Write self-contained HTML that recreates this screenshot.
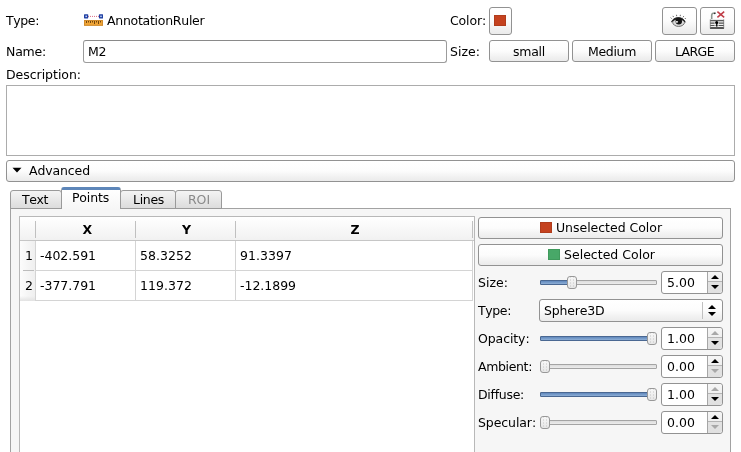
<!DOCTYPE html>
<html><head><meta charset="utf-8"><title>Annotation Properties</title>
<style>
html,body{margin:0;padding:0;background:#fff;}
body{width:741px;height:452px;position:relative;overflow:hidden;font-family:"DejaVu Sans","Liberation Sans",sans-serif;font-size:12.5px;color:#000;font-kerning:none;font-variant-ligatures:none;}
.t{position:absolute;line-height:14px;white-space:nowrap;will-change:transform;}
.btn{position:absolute;box-sizing:border-box;border:1px solid #929292;border-radius:3px;background:linear-gradient(#ffffff 0%,#fcfcfc 50%,#f1f1f1 80%,#ebebeb 100%);}
.box{position:absolute;box-sizing:border-box;border:1px solid #9c9c9c;border-top-color:#8a8a8a;border-radius:3px;background:#fff;}
.groove{position:absolute;box-sizing:border-box;height:5px;border:1px solid #a4a4a4;border-radius:1px;background:linear-gradient(#dcdcdc,#ececec);}
.fill{position:absolute;box-sizing:border-box;height:5px;border:1px solid #4a6892;border-radius:1px;background:linear-gradient(#6088bd,#8eafd6);}
.handle{position:absolute;box-sizing:border-box;width:10px;height:13px;border:1px solid #989898;border-radius:3px;background:radial-gradient(circle,#c4c4c4 0.55px,rgba(196,196,196,0) 0.95px) 1px 1.5px/3px 3px,linear-gradient(#f8f8f8,#e6e6e6);}
.spin{position:absolute;box-sizing:border-box;width:62px;height:23px;border:1px solid #929292;border-radius:3px;background:#fff;}
.spin .b{position:absolute;right:0;top:0;width:14px;height:21px;border-left:1px solid #a6a6a6;background:linear-gradient(#f6f6f6 0%,#efefef 45%,#e2e2e2 50%,#e0e0e0 100%);border-radius:0 3px 3px 0;}
.spin .b i{position:absolute;left:0;right:0;top:9px;height:1px;background:#b4b4b4;}
.up,.dn{position:absolute;width:0;height:0;border-left:4px solid transparent;border-right:4px solid transparent;}
.up{border-bottom:4px solid #000;}
.dn{border-top:4px solid #000;}
.dis.up{border-bottom-color:#a8a8a8;}
.dis.dn{border-top-color:#a8a8a8;}
.tab{position:absolute;box-sizing:border-box;border:1px solid #9a9a9a;border-bottom:none;border-radius:3px 3px 0 0;background:linear-gradient(#f4f4f4,#dcdcdc);}
.ln{position:absolute;}
</style></head><body>
<!-- row 1 -->
<div class="t" style="left:5.6px;top:14px;letter-spacing:-0.374px;">Type:</div>
<svg style="position:absolute;left:84px;top:14px" width="19" height="12" viewBox="0 0 19 12">
 <rect x="0" y="6" width="19" height="5.6" fill="#f1a637"/>
 <rect x="0.5" y="6.5" width="18" height="4.8" fill="none" stroke="#cf8a2c" stroke-width="1"/>
 <path d="M2.5 7v2M4.5 7v1.5M6.5 7v2M8.5 7v1.5M10.5 7v3M12.5 7v1.5M14.5 7v3M16.5 7v1.5" stroke="#5e3606" stroke-width="1" opacity="0.85"/>
 <path d="M4 2.4h11" stroke="#d04a6a" stroke-width="1" stroke-dasharray="1 1" opacity="0.8"/>
 <rect x="0" y="0.2" width="4.2" height="4.2" rx="0.6" fill="#1f3fa2"/>
 <rect x="1.4" y="1.6" width="1.6" height="1.5" fill="#bcd0f6"/>
 <rect x="14.9" y="0.2" width="4.2" height="4.2" rx="0.6" fill="#1f3fa2"/>
 <rect x="16.2" y="1.6" width="1.6" height="1.5" fill="#bcd0f6"/>
</svg>
<div class="t" style="left:107px;top:14px;letter-spacing:-0.271px;">AnnotationRuler</div>
<div class="t" style="left:450px;top:14px;letter-spacing:-0.141px;">Color:</div>
<div class="btn" style="left:489px;top:7px;width:23px;height:28px;"></div>
<div style="position:absolute;left:494px;top:15.2px;width:11.6px;height:11px;background:#c5421f;border:1px solid #b03c1c;box-sizing:border-box;"></div>
<div class="btn" style="left:662px;top:7px;width:35px;height:28px;"></div>
<div class="btn" style="left:700px;top:7px;width:35px;height:28px;"></div>
<svg style="position:absolute;left:668px;top:12px" width="20" height="17" viewBox="0 0 20 17">
 <path d="M3.6 6.6L2.7 5.6M5.6 5.1L4.9 3.9M8.7 4.2L8.5 2.8M12.2 4.2L12.4 2.8M15 5.3L15.8 4.1M16.9 7L17.7 6" stroke="#6a6a6a" stroke-width="1" fill="none"/>
 <ellipse cx="10.6" cy="10.3" rx="5.9" ry="4.1" fill="#dcdcdc" stroke="#6e6e6e" stroke-width="1"/>
 <path d="M3.5 10C5.3 4.6 14.4 3.4 17.3 10.2C14.6 6.4 6.6 6.2 3.5 10z" fill="#1e1e1e" stroke="#1e1e1e" stroke-width="0.8" stroke-linejoin="round"/>
 <circle cx="10.8" cy="9.2" r="3.2" fill="#141414"/>
 <ellipse cx="8.9" cy="9.8" rx="1.2" ry="0.9" fill="#f2f2f2"/>
</svg>
<svg style="position:absolute;left:706px;top:9px" width="22" height="22" viewBox="0 0 22 22">
 <path d="M5.7 10.4V6.4C5.7 4.6 7.2 3.7 9.2 4" stroke="#8c968e" stroke-width="1.6" fill="none"/>
 <path d="M8 4.6l1.6-.4" stroke="#333" stroke-width="1.2"/>
 <rect x="4" y="10.2" width="14" height="9.6" fill="#efefef"/>
 <path d="M4 11.6h14" stroke="#5a5a5a" stroke-width="1.3"/>
 <path d="M4 14.1h4.6M13 14.1h5M4 16.5h4.6M13 16.5h5" stroke="#555" stroke-width="1.2"/>
 <path d="M8.6 14.1h4.4M8.6 16.5h4.4" stroke="#aaa" stroke-width="1"/>
 <path d="M4 19h14" stroke="#2e2e2e" stroke-width="1.6"/>
 <path d="M4.3 10.4v9M17.7 10.4v9" stroke="#777" stroke-width="0.8"/>
 <circle cx="10.7" cy="13.4" r="1.5" fill="#000"/><rect x="10.1" y="13.4" width="1.3" height="4.2" fill="#000"/>
 <path d="M11.4 2.6L18.2 8.4M18.2 2.6L11.4 8.4" stroke="#bf3c46" stroke-width="1.5" fill="none"/>
</svg>
<!-- row 2 -->
<div class="t" style="left:5.6px;top:45px;letter-spacing:-0.218px;">Name:</div>
<div class="box" style="left:83px;top:40px;width:364px;height:23px;"></div>
<div class="t" style="left:88px;top:45px;letter-spacing:-0.369px;">M2</div>
<div class="t" style="left:450px;top:45px;letter-spacing:0.026px;">Size:</div>
<div class="btn" style="left:489px;top:40px;width:80px;height:22px;"></div><div class="t" style="left:513px;top:45px;letter-spacing:-0.259px;">small</div>
<div class="btn" style="left:572px;top:40px;width:80px;height:22px;"></div><div class="t" style="left:588px;top:45px;letter-spacing:-0.330px;">Medium</div>
<div class="btn" style="left:655px;top:40px;width:80px;height:22px;"></div><div class="t" style="left:675px;top:45px;letter-spacing:-0.557px;">LARGE</div>
<!-- description -->
<div class="t" style="left:5.6px;top:68px;letter-spacing:-0.034px;">Description:</div>
<div style="position:absolute;box-sizing:border-box;left:6px;top:85px;width:729px;height:71px;border:1px solid #acacac;background:#fff;"></div>
<!-- Advanced -->
<div class="btn" style="left:6px;top:160px;width:729px;height:22px;"></div>
<svg style="position:absolute;left:12px;top:167px" width="10" height="6"><path d="M0.5 0.8h9L5 5.6z" fill="#000"/></svg>
<div class="t" style="left:29px;top:164px;letter-spacing:-0.120px;">Advanced</div>
<!-- tabs -->
<div style="position:absolute;box-sizing:border-box;left:10px;top:208px;width:721px;height:260px;border:1px solid #a2a2a2;background:#f6f6f6;"></div>
<div class="tab" style="left:10px;top:190px;width:52px;height:19px;border-bottom:1px solid #9a9a9a;"></div>
<div class="tab" style="left:120px;top:190px;width:56px;height:19px;border-bottom:1px solid #9a9a9a;"></div>
<div class="tab" style="left:175px;top:190px;width:47px;height:19px;border-bottom:1px solid #9a9a9a;"></div>
<div class="tab" style="left:61px;top:187px;width:60px;height:22px;background:linear-gradient(#ffffff,#f6f6f6);border-top:3px solid #5d86b9;"></div>
<div class="t" style="left:22px;top:193px;letter-spacing:-0.406px;">Text</div>
<div class="t" style="left:72px;top:191px;letter-spacing:-0.166px;">Points</div>
<div class="t" style="left:133px;top:193px;letter-spacing:-0.312px;">Lines</div>
<div class="t" style="left:188px;top:193px;letter-spacing:-0.070px;color:#8a8a8a;">ROI</div>
<!-- table -->
<div style="position:absolute;box-sizing:border-box;left:19px;top:216px;width:456px;height:250px;border:1px solid #b8b8b8;background:#fff;"></div>
<div style="position:absolute;left:20px;top:217px;width:454px;height:23px;background:linear-gradient(#ffffff,#f1f1f1);border-bottom:1px solid #c6c6c6;"></div>
<div class="ln" style="left:35px;top:221px;width:1px;height:17px;background:#c0c0c0;"></div>
<div class="ln" style="left:35px;top:241px;width:1px;height:60px;background:#d4d4d4;"></div>
<div class="ln" style="left:135px;top:221px;width:1px;height:17px;background:#c0c0c0;"></div>
<div class="ln" style="left:135px;top:241px;width:1px;height:60px;background:#d4d4d4;"></div>
<div class="ln" style="left:235px;top:221px;width:1px;height:17px;background:#c0c0c0;"></div>
<div class="ln" style="left:235px;top:241px;width:1px;height:60px;background:#d4d4d4;"></div>
<div class="ln" style="left:472px;top:221px;width:1px;height:17px;background:#c0c0c0;"></div>
<div class="ln" style="left:472px;top:241px;width:1px;height:60px;background:#d4d4d4;"></div>
<div class="ln" style="left:36px;top:270px;width:437px;height:1px;background:#d4d4d4;"></div>
<div class="ln" style="left:20px;top:241px;width:15px;height:60px;background:linear-gradient(90deg,#fcfcfc,#efefef);"></div>
<div class="ln" style="left:20px;top:296px;width:15px;height:5px;background:linear-gradient(rgba(225,225,225,0),#e2e2e2);"></div>
<div class="ln" style="left:36px;top:300px;width:437px;height:1px;background:#d4d4d4;"></div>
<div class="ln" style="left:22.5px;top:269.5px;width:11px;height:1.6px;background:#bcbcbc;"></div>
<div class="t" style="left:36.6px;top:223px;width:100px;text-align:center;letter-spacing:-0.637px;font-weight:bold;">X</div>
<div class="t" style="left:136px;top:223px;width:100px;text-align:center;letter-spacing:-1.052px;font-weight:bold;">Y</div>
<div class="t" style="left:237px;top:223px;width:237px;text-align:center;letter-spacing:0.936px;font-weight:bold;">Z</div>
<div class="t" style="left:24.5px;top:249px;letter-spacing:0.047px;">1</div>
<div class="t" style="left:39.7px;top:249px;letter-spacing:-0.025px;">-402.591</div>
<div class="t" style="left:139.7px;top:249px;letter-spacing:0.044px;">58.3252</div>
<div class="t" style="left:239.7px;top:249px;letter-spacing:0.044px;">91.3397</div>
<div class="t" style="left:24.5px;top:279px;letter-spacing:0.047px;">2</div>
<div class="t" style="left:39.7px;top:279px;letter-spacing:-0.025px;">-377.791</div>
<div class="t" style="left:139.7px;top:279px;letter-spacing:0.044px;">119.372</div>
<div class="t" style="left:239.7px;top:279px;letter-spacing:-0.025px;">-12.1899</div>
<!-- right panel -->
<div class="btn" style="left:478px;top:217px;width:245px;height:22px;"></div>
<div style="position:absolute;left:540px;top:222.4px;width:11.6px;height:11px;background:#c5421f;box-sizing:border-box;border:1px solid #b03c1c;"></div>
<div class="t" style="left:556px;top:221px;letter-spacing:-0.028px;">Unselected Color</div>
<div class="btn" style="left:478px;top:244px;width:245px;height:22px;"></div>
<div style="position:absolute;left:548px;top:249.4px;width:11.6px;height:11px;background:#48a868;box-sizing:border-box;border:1px solid #3f9a5c;"></div>
<div class="t" style="left:564px;top:248px;letter-spacing:0.015px;">Selected Color</div>
<div class="t" style="left:478px;top:276px;letter-spacing:0.026px;">Size:</div>
<div class="groove" style="left:540px;top:280px;width:117px;"></div>
<div class="fill" style="left:540px;top:280px;width:31px;"></div>
<div class="handle" style="left:567px;top:276px;"></div>
<div class="spin" style="left:661px;top:271px;"><span class="b"><i></i></span></div>
<div class="t" style="left:667px;top:276px;letter-spacing:0.042px;">5.00</div>
<div class="up" style="left:711px;top:275px;"></div><div class="dn" style="left:711px;top:285px;"></div>
<div class="t" style="left:478px;top:304px;letter-spacing:-0.374px;">Type:</div>
<div class="btn" style="left:539px;top:299px;width:184px;height:23px;"></div>
<div class="t" style="left:544px;top:304px;letter-spacing:-0.174px;">Sphere3D</div>
<div class="ln" style="left:702px;top:302px;width:1px;height:17px;background:#c0c0c0;"></div>
<div class="up" style="left:707.5px;top:305px;"></div><div class="dn" style="left:707.5px;top:312px;"></div>
<div class="t" style="left:478px;top:332px;letter-spacing:-0.099px;">Opacity:</div>
<div class="groove" style="left:540px;top:336px;width:117px;"></div>
<div class="fill" style="left:540px;top:336px;width:111px;"></div>
<div class="handle" style="left:647px;top:332px;"></div>
<div class="spin" style="left:661px;top:327px;"><span class="b"><i></i></span></div>
<div class="t" style="left:667px;top:332px;letter-spacing:0.042px;">1.00</div>
<div class="up dis" style="left:711px;top:331px;"></div><div class="dn" style="left:711px;top:341px;"></div>
<div class="t" style="left:478px;top:360px;letter-spacing:-0.358px;">Ambient:</div>
<div class="groove" style="left:540px;top:364px;width:117px;"></div>
<div class="handle" style="left:540px;top:360px;"></div>
<div class="spin" style="left:661px;top:355px;"><span class="b"><i></i></span></div>
<div class="t" style="left:667px;top:360px;letter-spacing:0.042px;">0.00</div>
<div class="up" style="left:711px;top:359px;"></div><div class="dn dis" style="left:711px;top:369px;"></div>
<div class="t" style="left:478px;top:388px;letter-spacing:-0.280px;">Diffuse:</div>
<div class="groove" style="left:540px;top:392px;width:117px;"></div>
<div class="fill" style="left:540px;top:392px;width:111px;"></div>
<div class="handle" style="left:647px;top:388px;"></div>
<div class="spin" style="left:661px;top:383px;"><span class="b"><i></i></span></div>
<div class="t" style="left:667px;top:388px;letter-spacing:0.042px;">1.00</div>
<div class="up dis" style="left:711px;top:387px;"></div><div class="dn" style="left:711px;top:397px;"></div>
<div class="t" style="left:478px;top:416px;letter-spacing:-0.093px;">Specular:</div>
<div class="groove" style="left:540px;top:420px;width:117px;"></div>
<div class="handle" style="left:540px;top:416px;"></div>
<div class="spin" style="left:661px;top:411px;"><span class="b"><i></i></span></div>
<div class="t" style="left:667px;top:416px;letter-spacing:0.042px;">0.00</div>
<div class="up" style="left:711px;top:415px;"></div><div class="dn dis" style="left:711px;top:425px;"></div>
</body></html>
